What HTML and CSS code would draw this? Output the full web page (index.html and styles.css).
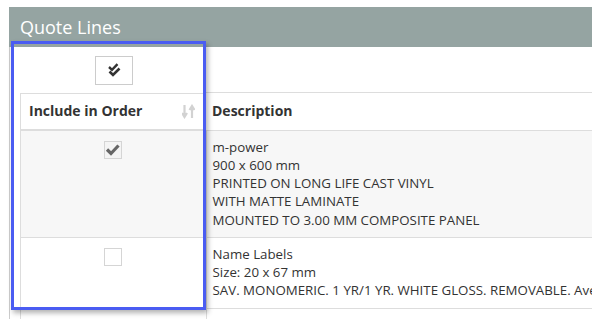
FILE: index.html
```html
<!DOCTYPE html>
<html lang="en">
<head>
    <meta charset="UTF-8">
    <meta name="viewport" content="width=device-width, initial-scale=1.0">
    <title>Quote Lines</title>
    <link rel="stylesheet" href="styles.css">
</head>
<body>
    <div class="panel">
        <div class="panel-heading">Quote Lines</div>
        <div class="panel-body">
            <div class="toolbar">
                <button class="check-all" type="button" title="Select all">
                    <svg width="14" height="15" viewBox="0 0 14 15">
                        <path d="M2 4 L5 6.8 L10.5 1.2" fill="none" stroke="#333" stroke-width="2.4"/>
                        <path d="M2.5 8.5 L6 12 L12.5 5.5" fill="none" stroke="#333" stroke-width="2.6"/>
                    </svg>
                </button>
            </div>
            <table class="lines">
                <thead>
                    <tr>
                        <th class="col-include">
                            <span>Include in Order</span>
                            <svg class="sort" width="13" height="15" viewBox="0 0 13 15">
                                <path d="M2.5 1 V11 M0 9 L2.5 13 L5 9" fill="none" stroke="#d2d2d2" stroke-width="2.2"/>
                                <path d="M10 14 V4 M7.5 6 L10 2 L12.5 6" fill="none" stroke="#d2d2d2" stroke-width="2.2"/>
                            </svg>
                        </th>
                        <th class="col-desc">Description</th>
                    </tr>
                </thead>
                <tbody>
                    <tr class="odd">
                        <td class="col-include">
                            <span class="checkbox checked">
                                <svg width="16" height="16" viewBox="0 0 16 16">
                                    <path d="M2 7.5 L6 11.5 L13.5 3.5" fill="none" stroke="#666" stroke-width="3.2"/>
                                </svg>
                            </span>
                        </td>
                        <td class="col-desc">
                            m-power<br>
                            900 x 600 mm<br>
                            PRINTED ON LONG LIFE CAST VINYL<br>
                            WITH MATTE LAMINATE<br>
                            MOUNTED TO 3.00 MM COMPOSITE PANEL
                        </td>
                    </tr>
                    <tr>
                        <td class="col-include">
                            <span class="checkbox"></span>
                        </td>
                        <td class="col-desc">
                            Name Labels<br>
                            Size: 20 x 67 mm<br>
                            SAV. MONOMERIC. 1 YR/1 YR. WHITE GLOSS. REMOVABLE. Avery MPI 2903 Easy Apply
                        </td>
                    </tr>
                    <tr class="odd spacer">
                        <td class="col-include"></td>
                        <td class="col-desc"></td>
                    </tr>
                </tbody>
            </table>
        </div>
    </div>

    <!-- highlight round the include column -->
    <div class="highlight"></div>
</body>
</html>
```

FILE: styles.css
```css
* {
    margin: 0;
    padding: 0;
    box-sizing: border-box;
}

html, body {
    width: 100%;
    height: 100%;
    overflow: hidden;
    background: #fff;
    font-family: "Open Sans", "Liberation Sans", sans-serif;
    color: #333;
}

body {
    position: relative;
    padding: 7px 0 0 9px;
}

.panel {
    border-left: 1px solid #ccc;
    height: 100%;
}

.panel-heading {
    height: 40px;
    background: #95a4a2;
    color: #fff;
    font-size: 18px;
    line-height: 40px;
    margin-left: -1px;
    padding-left: 11px;
    white-space: nowrap;
}

.panel-body {
    padding-left: 10px;
}

.toolbar {
    height: 45px;
    width: 185px;
    display: flex;
    justify-content: center;
    padding: 9px 0 0 3px;
}

.check-all {
    width: 38px;
    height: 29px;
    border: 1px solid #ccc;
    background: #fff;
    display: flex;
    align-items: center;
    justify-content: center;
}

.lines {
    border-collapse: collapse;
    border-left: 1px solid #ddd;
    width: 700px;
    font-size: 13.3px;
    line-height: 18.25px;
    white-space: nowrap;
}

.lines th,
.lines td {
    border-top: 1px solid #ddd;
    border-bottom: 1px solid #ddd;
    text-align: left;
    vertical-align: top;
}

.lines th {
    height: 37px;
    font-size: 14px;
    font-weight: bold;
    vertical-align: middle;
    padding: 0 8px;
}

.lines th.col-include {
    display: flex;
    align-items: center;
    justify-content: space-between;
    height: 37px;
    padding-right: 10px;
}

.col-include {
    width: 185px;
    border-right: 1px solid #ddd;
}

.lines td.col-include {
    text-align: center;
    padding-top: 10px;
}

.lines td.col-desc {
    padding: 7px 8px 8px 6px;
}

.lines th.col-desc {
    padding-left: 6px;
}

.lines tr.odd td {
    background: #f7f7f7;
}

.lines tr.spacer td {
    height: 40px;
    background: #fff;
}

.sort {
    display: block;
    margin-top: 1px;
}

.checkbox {
    display: inline-block;
    width: 18px;
    height: 18px;
    border: 1px solid #d5d5d5;
    background: #fff;
    vertical-align: top;
}

.checkbox.checked {
    background: #f4f4f4;
}

.checkbox svg {
    display: block;
    margin: 0;
}

.highlight {
    position: absolute;
    left: 11px;
    top: 41px;
    width: 195px;
    height: 269px;
    border: 3px solid #4a5cf2;
    box-shadow: 2px 3px 5px rgba(0, 0, 0, 0.3);
}
```
